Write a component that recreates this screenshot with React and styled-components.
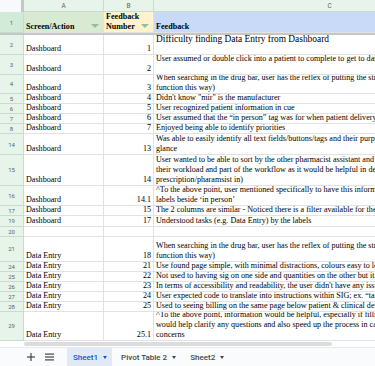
import React from "react";
import styled, { createGlobalStyle } from "styled-components";

const GlobalStyle = createGlobalStyle`
  html, body {
    margin: 0;
    padding: 0;
    background: #ffffff;
    overflow: hidden;
  }
`;

const Frame = styled.div`
  width: 375px;
  height: 366px;
  display: flex;
  flex-direction: column;
  overflow: hidden;
  background: #ffffff;
`;

const SheetArea = styled.div`
  flex: 1;
  overflow: hidden;
  display: flex;
  flex-direction: column;
`;

const Row = styled.div`
  display: grid;
  grid-template-columns: 24px 80px 50px 352px;
  height: ${({ h }) => h}px;
  flex-shrink: 0;
  box-sizing: border-box;
  border-bottom: ${({ frozen }) => (frozen ? "2px solid #c4c7c5" : "none")};
`;

const Corner = styled.div`
  background: #f8f9fa;
  border-right: 3px solid #c4c7c5;
  box-sizing: border-box;
`;

const ColLetter = styled.div`
  background: #e6f4ea;
  border-right: 1px solid #c8dccd;
  border-bottom: 1px solid #c8dccd;
  box-sizing: border-box;
  font-family: Roboto, "Liberation Sans", sans-serif;
  font-size: 6.5px;
  color: #5f6368;
  display: flex;
  align-items: center;
  justify-content: center;
`;

const RowNum = styled.div`
  background: ${({ strong }) => (strong ? "#d2ebd9" : "#e6f4ea")};
  border-right: 1px solid #c8dccd;
  border-bottom: 1px solid #c8dccd;
  box-sizing: border-box;
  font-family: Roboto, "Liberation Sans", sans-serif;
  font-size: 6px;
  color: #5f6368;
  display: flex;
  align-items: center;
  justify-content: center;
`;

const Cell = styled.div`
  position: relative;
  background: ${({ bg }) => bg || "#ffffff"};
  border-right: 1px solid #e2e2e2;
  border-bottom: 1px solid #e2e2e2;
  box-sizing: border-box;
  padding: 0 2px 0 2px;
  display: flex;
  flex-direction: column;
  justify-content: flex-end;
  align-items: ${({ right }) => (right ? "flex-end" : "flex-start")};
  overflow: hidden;
  font-family: "Liberation Serif", "Times New Roman", serif;
  font-size: ${({ size }) => size || 8.1}px;
  line-height: 10px;
  font-weight: ${({ bold }) => (bold ? 700 : 400)};
  color: #000000;
`;

const Line = styled.span`
  display: block;
  white-space: nowrap;
  min-height: 10px;
`;

const FilterMark = styled.span`
  position: absolute;
  right: 4px;
  bottom: 4px;
  width: 0;
  height: 0;
  border-left: 4px solid transparent;
  border-right: 4px solid transparent;
  border-top: 4px solid #8fc196;
`;

const ScrollRow = styled.div`
  height: 6px;
  padding-left: 24px;
  display: flex;
  align-items: center;
  flex-shrink: 0;
`;

const Thumb = styled.div`
  width: 308px;
  height: 4px;
  border-radius: 2px;
  background: #dadce0;
`;

const TabBar = styled.div`
  height: 19px;
  flex-shrink: 0;
  background: #f9fbfd;
  border-top: 1px solid #e8eaed;
  box-sizing: border-box;
  display: flex;
  align-items: stretch;
  padding-left: 22px;
  font-family: Roboto, "Liberation Sans", sans-serif;
  font-size: 8px;
  color: #444746;
`;

const IconButton = styled.div`
  width: 18px;
  display: flex;
  align-items: center;
  justify-content: center;
  color: #444746;
`;

const Tab = styled.div`
  display: flex;
  align-items: center;
  gap: 5px;
  padding: 0 5px 0 6px;
  margin-left: ${({ first }) => (first ? "9px" : "3px")};
  background: ${({ active }) => (active ? "#e1e9f7" : "transparent")};
  color: ${({ active }) => (active ? "#0b57d0" : "#444746")};
  font-weight: 500;
  white-space: nowrap;
`;

const Caret = styled.span`
  width: 0;
  height: 0;
  border-left: 2.5px solid transparent;
  border-right: 2.5px solid transparent;
  border-top: 3px solid currentColor;
`;

const rows = [
  { n: 2, h: 20, a: "Dashboard", b: "1", cs: 9.4, c: ["Difficulty finding Data Entry from Dashboard", ""] },
  { n: 3, h: 19.5, a: "Dashboard", b: "2", c: ["User assumed or double click into a patient to complete to get to data entry", ""] },
  { n: 4, h: 19.5, a: "Dashboard", b: "3", c: ["When searching in the drug bar, user has the reflex of putting the strength first (i.e. other software", "function this way)"] },
  { n: 5, h: 10, a: "Dashboard", b: "4", c: ["Didn't know \"mir\" is the manufacturer"] },
  { n: 6, h: 10, a: "Dashboard", b: "5", c: ["User recognized patient information in cue"] },
  { n: 7, h: 10, a: "Dashboard", b: "6", c: ["User assumed that the \u201cin person\u201d tag was for when patient delivery was needed"] },
  { n: 8, h: 10, a: "Dashboard", b: "7", c: ["Enjoyed being able to identify priorities"] },
  { n: 14, h: 21, a: "Dashboard", b: "13", c: ["Was able to easily identify all text fields/buttons/tags and their purpose at a", "glance"] },
  { n: 15, h: 30.5, a: "Dashboard", b: "14", c: ["User wanted to be able to sort by the other pharmacist assistant and to see", "their workload and part of the workflow as it would be helpful in delegating (e.g.", "prescription/pharamsist in)"] },
  { n: 16, h: 20.5, a: "Dashboard", b: "14.1", c: ["^To the above point, user mentioned specifically to have this information as", "labels beside \u2018in person\u2019"] },
  { n: 17, h: 10, a: "Dashboard", b: "15", c: ["The 2 columns are similar - Noticed there is a filter available for the columns"] },
  { n: 19, h: 10.5, a: "Dashboard", b: "17", c: ["Understood tasks (e.g. Data Entry) by the labels"] },
  { n: 20, h: 10, a: "", b: "", c: [""] },
  { n: 21, h: 25, a: "Data Entry", b: "18", c: ["When searching in the drug bar, user has the reflex of putting the strength first (i.e. other software", "function this way)"] },
  { n: 24, h: 10, a: "Data Entry", b: "21", c: ["Use found page simple, with minimal distractions, colours easy to look at"] },
  { n: 25, h: 10, a: "Data Entry", b: "22", c: ["Not used to having sig on one side and quantities on the other but it was fine"] },
  { n: 26, h: 10, a: "Data Entry", b: "23", c: ["In terms of accessibility and readability, the user didn't have any issues"] },
  { n: 27, h: 10, a: "Data Entry", b: "24", c: ["User expected code to translate into instructions within SIG; ex. \u201ctake one"] },
  { n: 28, h: 10, a: "Data Entry", b: "25", c: ["Used to seeing billing on the same page below patient & clinical details"] },
  { n: 29, h: 29.5, a: "Data Entry", b: "25.1", c: ["^To the above point, information would be helpful, especially if filling, and", "would help clarify any questions and also speed up the process in case of", "concerns"] },
];

function MenuIcon() {
  return (
    <svg width="9" height="8" viewBox="0 0 9 8">
      <rect x="0" y="0.5" width="9" height="1.2" fill="#444746" />
      <rect x="0" y="3.4" width="9" height="1.2" fill="#444746" />
      <rect x="0" y="6.3" width="9" height="1.2" fill="#444746" />
    </svg>
  );
}

function PlusIcon() {
  return (
    <svg width="8" height="8" viewBox="0 0 8 8">
      <rect x="3.4" y="0" width="1.2" height="8" fill="#444746" />
      <rect x="0" y="3.4" width="8" height="1.2" fill="#444746" />
    </svg>
  );
}

export default function App() {
  return (
    <>
      <GlobalStyle />
      <Frame>
        <SheetArea>
          <Row h={12}>
            <Corner />
            <ColLetter>A</ColLetter>
            <ColLetter>B</ColLetter>
            <ColLetter>C</ColLetter>
          </Row>
          <Row h={23} frozen>
            <RowNum strong>1</RowNum>
            <Cell bg="#d9ead3" bold>
              <Line>Screen/Action</Line>
              <FilterMark />
            </Cell>
            <Cell bg="#fff2cc" bold>
              <Line>Feedback</Line>
              <Line>Number</Line>
              <FilterMark />
            </Cell>
            <Cell bg="#c9daf8" bold>
              <Line>Feedback</Line>
            </Cell>
          </Row>
          {rows.map((r) => (
            <Row key={r.n} h={r.h}>
              <RowNum>{r.n}</RowNum>
              <Cell>
                <Line>{r.a}</Line>
              </Cell>
              <Cell right>
                <Line>{r.b}</Line>
              </Cell>
              <Cell size={r.cs}>
                {r.c.map((t, i) => (
                  <Line key={i}>{t || "\u00a0"}</Line>
                ))}
              </Cell>
            </Row>
          ))}
        </SheetArea>
        <ScrollRow>
          <Thumb />
        </ScrollRow>
        <TabBar>
          <IconButton>
            <PlusIcon />
          </IconButton>
          <IconButton>
            <MenuIcon />
          </IconButton>
          <Tab active first>
            Sheet1 <Caret />
          </Tab>
          <Tab>
            Pivot Table 2 <Caret />
          </Tab>
          <Tab>
            Sheet2 <Caret />
          </Tab>
        </TabBar>
      </Frame>
    </>
  );
}
